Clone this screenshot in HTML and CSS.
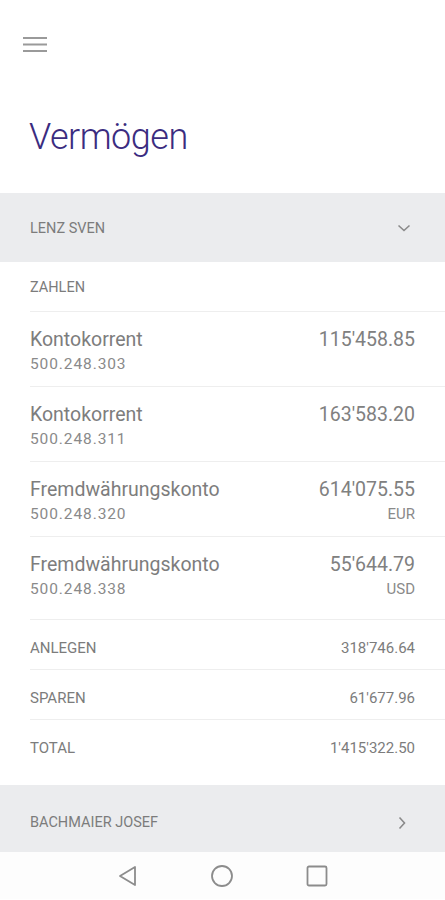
FILE: index.html
```html
<!DOCTYPE html>
<html lang="de">
<head>
<meta charset="utf-8">
<title>Vermögen</title>
<link rel="stylesheet" href="styles.css">
</head>
<body>
<div class="screen">
  <header class="topbar">
    <svg class="menu" width="24" height="16" viewBox="0 0 24 16">
      <rect x="0" y="0" width="24" height="2" fill="#9a9a9a"/>
      <rect x="0" y="6.5" width="24" height="2" fill="#9a9a9a"/>
      <rect x="0" y="13" width="24" height="2" fill="#9a9a9a"/>
    </svg>
  </header>
  <h1 class="title">Vermögen</h1>

  <div class="band">
    <span class="band-label">LENZ SVEN</span>
    <svg class="chev" width="14" height="10" viewBox="0 0 14 10">
      <path d="M1.5 2.5 L7 7.5 L12.5 2.5" fill="none" stroke="#8a8a8a" stroke-width="1.6"/>
    </svg>
  </div>

  <div class="list">
    <div class="section">ZAHLEN</div>
    <div class="acct">
      <div class="acct-left"><div class="name">Kontokorrent</div><div class="num">500.248.303</div></div>
      <div class="acct-right"><div class="amt">115'458.85</div></div>
    </div>
    <div class="acct">
      <div class="acct-left"><div class="name">Kontokorrent</div><div class="num">500.248.311</div></div>
      <div class="acct-right"><div class="amt">163'583.20</div></div>
    </div>
    <div class="acct">
      <div class="acct-left"><div class="name">Fremdwährungskonto</div><div class="num">500.248.320</div></div>
      <div class="acct-right"><div class="amt">614'075.55</div><div class="cur">EUR</div></div>
    </div>
    <div class="acct last">
      <div class="acct-left"><div class="name">Fremdwährungskonto</div><div class="num">500.248.338</div></div>
      <div class="acct-right"><div class="amt">55'644.79</div><div class="cur">USD</div></div>
    </div>
    <div class="sum"><span>ANLEGEN</span><span>318'746.64</span></div>
    <div class="sum"><span>SPAREN</span><span>61'677.96</span></div>
    <div class="sum total"><span>TOTAL</span><span>1'415'322.50</span></div>
  </div>

  <div class="band band2">
    <span class="band-label">BACHMAIER JOSEF</span>
    <svg class="chev-r" width="10" height="14" viewBox="0 0 10 14">
      <path d="M2.5 1.5 L7.5 7 L2.5 12.5" fill="none" stroke="#8a8a8a" stroke-width="1.6"/>
    </svg>
  </div>

  <nav class="navbar">
    <svg width="20" height="22" viewBox="0 0 20 22"><path d="M17 2 L17 20 L2 11 Z" fill="none" stroke="#8c8c8c" stroke-width="1.8" stroke-linejoin="round"/></svg>
    <svg width="24" height="24" viewBox="0 0 24 24"><circle cx="12" cy="12" r="10" fill="none" stroke="#8c8c8c" stroke-width="1.8"/></svg>
    <svg width="22" height="22" viewBox="0 0 22 22"><rect x="1.5" y="1.5" width="19" height="19" rx="1.5" fill="none" stroke="#8c8c8c" stroke-width="1.8"/></svg>
  </nav>
</div>
</body>
</html>
```

FILE: styles.css
```css
* { box-sizing: border-box; }
html, body { margin: 0; padding: 0; background: #ffffff; }
body { font-family: Roboto, "Noto Sans", "Liberation Sans", sans-serif; color: #7a7a7a; }
.screen { width: 445px; height: 900px; display: flex; flex-direction: column; overflow: hidden; }

.topbar { height: 88px; padding: 37px 0 0 23px; }
.menu { display: block; }

.title {
  margin: 0;
  padding: 27px 0 0 29px;
  height: 105px;
  font-size: 36px;
  font-weight: 300;
  line-height: 44px;
  color: #3b2c80;
  letter-spacing: -0.5px;
}

.band {
  height: 69px;
  background: #ebecee;
  display: flex;
  align-items: center;
  justify-content: space-between;
  padding: 1px 34px 0 30px;
}
.band-label { font-size: 14.5px; color: #7c7c7c; }

.list { padding-left: 30px; padding-right: 30px; margin-right: -30px; }
.section {
  height: 49px;
  display: flex;
  align-items: center;
  font-size: 14.5px;
  color: #7c7c7c;
  padding-top: 2px;
}
.acct {
  display: flex;
  justify-content: space-between;
  border-top: 1px solid #eeeeee;
  padding: 16px 30px 10px 0;
}
.acct.last { padding-bottom: 18px; }
.name { font-size: 19.5px; line-height: 24px; color: #7d7d7d; }
.num { font-size: 15.5px; line-height: 24px; color: #8a8a8a; letter-spacing: 0.9px; }
.acct-right { text-align: right; }
.amt { font-size: 19.5px; line-height: 24px; color: #808080; }
.cur { font-size: 15px; line-height: 24px; color: #8a8a8a; }

.sum {
  height: 50px;
  display: flex;
  justify-content: space-between;
  align-items: center;
  border-top: 1px solid #eeeeee;
  padding: 6px 30px 0 0;
  font-size: 15px;
  color: #7c7c7c;
}
.sum.total { height: 66px; padding-top: 4px; padding-bottom: 14px; }

.band2 { height: 67px; padding-top: 8px; padding-right: 38px; }

.navbar {
  height: 47px;
  background: #fdfdfd;
  display: flex;
  align-items: center;
  justify-content: center;
  gap: 72px;
}
.navbar svg { display: block; }
```
